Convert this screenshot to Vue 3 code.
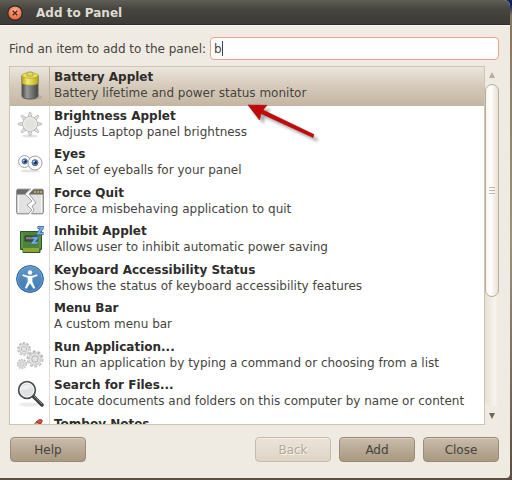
<script setup>
import { ref } from 'vue'

const query = ref('b')
const selected = ref(0)
const items = [
  { icon: 'battery', name: 'Battery Applet', text: 'Battery lifetime and power status monitor' },
  { icon: 'sun', name: 'Brightness Applet', text: 'Adjusts Laptop panel brightness' },
  { icon: 'eyes', name: 'Eyes', text: 'A set of eyeballs for your panel' },
  { icon: 'quit', name: 'Force Quit', text: 'Force a misbehaving application to quit' },
  { icon: 'chip', name: 'Inhibit Applet', text: 'Allows user to inhibit automatic power saving' },
  { icon: 'access', name: 'Keyboard Accessibility Status', text: 'Shows the status of keyboard accessibility features' },
  { icon: '', name: 'Menu Bar', text: 'A custom menu bar' },
  { icon: 'gears', name: 'Run Application...', text: 'Run an application by typing a command or choosing from a list' },
  { icon: 'search', name: 'Search for Files...', text: 'Locate documents and folders on this computer by name or content' },
  { icon: 'note', name: 'Tomboy Notes', text: '' },
]
const gears = [
  { x: 8, y: 7, s: 0.8 },
  { x: 19, y: 17, s: 1 },
  { x: 6, y: 22, s: 0.6 },
]
</script>

<template>
  <div class="desktop">
    <main class="window">
      <header class="titlebar">
        <button class="close" aria-label="Close window">
          <svg viewBox="0 0 16 16" width="16" height="16">
            <defs>
              <radialGradient id="orb" cx=".5" cy=".35" r=".6">
                <stop offset="0" stop-color="#ffb596" />
                <stop offset="1" stop-color="#e9683f" />
              </radialGradient>
            </defs>
            <circle cx="8" cy="8" r="7.7" fill="#2b2723" />
            <circle cx="8" cy="8" r="6.6" fill="url(#orb)" />
            <path d="M5.700 5.700l4.600 4.600M10.300 5.700l-4.600 4.600" stroke="#54291c" stroke-width="1.400" />
          </svg>
        </button>
        <h1>Add to Panel</h1>
      </header>

      <div class="body">
        <div class="search">
          <label for="find">Find an item to add to the panel:</label>
          <div class="field">
            <input id="find" v-model="query" type="text" autocomplete="off" />
            <span class="caret"></span>
          </div>
        </div>

        <div class="pane">
          <div class="viewport">
            <ul class="list" role="listbox" aria-label="Panel items">
              <li
                v-for="(item, i) in items"
                :key="item.name"
                role="option"
                :aria-selected="i === selected"
                :class="{ selected: i === selected }"
                @click="selected = i"
              >
                <span class="icon">
                  <svg v-if="item.icon === 'battery'" viewBox="0 0 28 30" width="28" height="30">
                    <defs>
                      <linearGradient id="cell"><stop offset="0" stop-color="#444" /><stop offset=".3" stop-color="#9a9a9a" /><stop offset=".65" stop-color="#707070" /><stop offset="1" stop-color="#444" /></linearGradient>
                      <linearGradient id="cap"><stop offset="0" stop-color="#b3a51c" /><stop offset=".35" stop-color="#f6ec7b" /><stop offset="1" stop-color="#b8a817" /></linearGradient>
                    </defs>
                    <ellipse cx="16" cy="26" rx="10" ry="3" fill="#6d6250" opacity=".2" />
                    <path d="M6 5v20c0 4 16 4 16 0V5z" fill="url(#cell)" stroke="#5d5d5d" />
                    <path d="M6 4v8c0 3 16 3 16 0V4z" fill="url(#cap)" stroke="#9b8f22" stroke-width=".7" />
                    <ellipse cx="14" cy="4.5" rx="8" ry="2.8" fill="#e9df55" stroke="#aaa031" stroke-width=".7" />
                    <path d="M11 2v2.500c0 1 6 1 6 0V2c0-1.400-6-1.400-6 0z" fill="#e0d464" stroke="#918735" stroke-width=".6" />
                  </svg>
                  <svg v-else-if="item.icon === 'sun'" viewBox="0 0 28 28" width="28" height="28">
                    <ellipse cx="14" cy="25" rx="8" ry="1.500" fill="#e2e2e2" />
                    <g v-for="n in 8" :key="n" :transform="`rotate(${n * 45} 14 13)`">
                      <path d="M12.200 6.500l1-5q.8-1 1.600 0l1 5z" fill="#e4e4e0" stroke="#b0b0ab" stroke-width=".8" />
                    </g>
                    <circle cx="14" cy="13" r="7.400" fill="#e2e3df" stroke="#b8b9b5" />
                    <circle cx="14" cy="13" r="6.300" fill="none" stroke="#f3f3f1" />
                  </svg>
                  <svg v-else-if="item.icon === 'eyes'" viewBox="0 0 28 28" width="28" height="28">
                    <ellipse cx="14" cy="22" rx="10" ry="1.500" fill="#e4e4e4" />
                    <circle cx="8.500" cy="12.500" r="6" fill="#fafafa" stroke="#9da1a4" />
                    <circle cx="8.700" cy="12.400" r="2.600" fill="#6587b8" stroke="#4a6c9c" />
                    <circle cx="9.200" cy="12.400" r="1.400" fill="#112e5d" />
                    <circle cx="19" cy="14" r="7" fill="#fafafa" stroke="#9da1a4" />
                    <circle cx="19" cy="13.700" r="3" fill="#6587b8" stroke="#4a6c9c" />
                    <circle cx="19.400" cy="13.700" r="1.600" fill="#112e5d" />
                    <circle cx="18" cy="12.600" r=".8" fill="#fff" />
                    <circle cx="7.900" cy="11.500" r=".7" fill="#fff" />
                  </svg>
                  <svg v-else-if="item.icon === 'quit'" viewBox="0 0 28 28" width="28" height="28">
                    <rect x=".7" y="1.200" width="26.600" height="24.600" rx="1.500" fill="#e2e2e2" stroke="#7b7b7b" />
                    <path d="M1 1.500h26v5H1z" fill="#6a6a6a" />
                    <path d="M2.500 7.500v17M25.500 7.500v17" stroke="#f6f6f6" />
                    <path d="M18 4h2M21 4h2M24 4h2" stroke="#ddb84b" stroke-width="1.500" />
                    <path d="M15 0l3 0-5 6 7 9-4 3 2 4-3 5h-3l4-5-5-5 5-4-7-7z" fill="#fff" />
                    <path d="M15 1L9 6l7 7-5 4 5 5-4 4M18 1l-5 5 7 9-4 3 2 4-3 4" fill="none" stroke="#8c8c8c" stroke-width=".8" />
                  </svg>
                  <svg v-else-if="item.icon === 'chip'" viewBox="0 0 28 28" width="28" height="28">
                    <path d="M4.500 5.500h21v18H24v3H7v-3H4.500z" fill="#4a8635" stroke="#2c5521" />
                    <path d="M6 7v15M24 10v12" stroke="#73a357" />
                    <path d="M8 22v4M10 22v4M12 22v4M14 22v4M16 22v4M18 22v4M20 22v4M22 22v4" stroke="#d4c33a" />
                    <path d="M9 10h12v5H9z" fill="#51585b" stroke="#2d3b35" />
                    <path d="M10 12h7" stroke="#a6adac" />
                    <path d="M16.500 12h4.200l-4 5h4.800M21.500 1.500h5l-4.500 6h5.500" fill="none" stroke="#38679c" stroke-width="3" />
                    <path d="M16.500 12h4.200l-4 5h4.800M21.500 1.500h5l-4.500 6h5.500" fill="none" stroke="#7db0e0" stroke-width="1.700" />
                  </svg>
                  <svg v-else-if="item.icon === 'access'" viewBox="0 0 28 28" width="28" height="28">
                    <defs><linearGradient id="blue" x2="0" y2="1"><stop offset="0" stop-color="#6498c8" /><stop offset="1" stop-color="#3c79b3" /></linearGradient></defs>
                    <circle cx="14" cy="14" r="13.400" fill="url(#blue)" stroke="#2f669c" />
                    <circle cx="14" cy="14" r="12.200" fill="none" stroke="#76a6d4" stroke-width=".7" />
                    <circle cx="14" cy="7.500" r="2.200" fill="#fff" />
                    <path d="M7 9.500l5 1.500h4l5-1.500.5 1.200-5.300 2.100v3.700l2.800 6.500-1.500.6L14 18l-3.500 5.600-1.500-.6 2.800-6.500v-3.700l-5.300-2.100z" fill="#fff" stroke="#fff" stroke-width=".3" />
                  </svg>
                  <svg v-else-if="item.icon === 'gears'" viewBox="0 0 28 28" width="28" height="28">
                    <g v-for="(g, k) in gears" :key="k" :transform="`translate(${g.x} ${g.y}) scale(${g.s})`">
                      <circle r="7" fill="none" stroke="#b4b4b4" stroke-width="3" stroke-dasharray="2.700 1.700" />
                      <circle r="6.600" fill="none" stroke="#e2e2e2" stroke-width="2" stroke-dasharray="2.500 1.900" />
                      <circle r="6" fill="#e2e2e2" stroke="#c9c9c9" />
                      <circle r="3.200" fill="#f1f1f1" stroke="#adadad" />
                      <circle r="1.300" fill="#fff" stroke="#c0c0c0" stroke-width=".7" />
                    </g>
                  </svg>
                  <svg v-else-if="item.icon === 'search'" viewBox="0 0 28 28" width="28" height="28">
                    <ellipse cx="13" cy="24.500" rx="10" ry="2" fill="#ebebeb" />
                    <path d="M17 16l9 9" stroke="#3e4040" stroke-width="3.500" stroke-linecap="round" />
                    <path d="M18 16l8 8" stroke="#858a8a" stroke-width="1" />
                    <circle cx="11" cy="10" r="8.300" fill="#dfe2e3" stroke="#4a4e4e" stroke-width="1.800" />
                    <circle cx="11" cy="10" r="6.900" fill="none" stroke="#f8f8f8" />
                    <path d="M5 10c2-6 8-6 11-4-2 3-6 4-11 4z" fill="#fff" opacity=".45" />
                  </svg>
                  <svg v-else-if="item.icon === 'note'" viewBox="0 0 28 28" width="28" height="28">
                    <path d="M2 8l14-2 8 4v16H5z" fill="#f2d75c" stroke="#b59a30" />
                    <path d="M12 13L21 2l4 2-8 12-5 2z" fill="#e3a665" stroke="#70432d" stroke-width=".8" />
                    <path d="M20.500 3L23 .7c1-1 4 0 3 2L24.500 5z" fill="#cf5148" stroke="#84241f" stroke-width=".8" />
                  </svg>
                </span>
                <span class="copy">
                  <strong>{{ item.name }}</strong>
                  <span v-if="item.text">{{ item.text }}</span>
                </span>
              </li>
            </ul>
          </div>
          <div class="scrollbar" aria-hidden="true">
            <svg class="arrow" viewBox="0 0 6 6" width="6" height="6"><path d="M3 0l3 6H0z" fill="#b8aea0" /></svg>
            <div class="track">
              <div class="thumb"><i></i><i></i><i></i></div>
            </div>
            <svg class="arrow" viewBox="0 0 6 6" width="6" height="6"><path d="M0 0h6L3 6z" fill="#69655d" /></svg>
          </div>
        </div>

        <footer class="actions">
          <button class="btn help">Help</button>
          <button class="btn" disabled>Back</button>
          <button class="btn">Add</button>
          <button class="btn">Close</button>
        </footer>
      </div>

      <svg class="pointer" viewBox="0 0 76 46" width="76" height="46" aria-hidden="true">
        <defs><filter id="soft" x="-20%" y="-20%" width="150%" height="150%"><feGaussianBlur stdDeviation="1.500" /></filter></defs>
        <path d="M0 1l19 .3-4 4.700 51 24.500-1 3L13 9.500 11.500 16z" fill="#555" opacity=".5" filter="url(#soft)" transform="translate(4 4)" />
        <path d="M0 1l19 .3-4 4.700 51 24.500-1 3L13 9.500 11.500 16z" fill="#c00a0a" stroke="#b00c0c" stroke-width=".6" />
      </svg>
    </main>
  </div>
</template>

<style>
body {
  margin: 0;
  background: #5a4f45;
}
</style>

<style scoped>
.desktop {
  min-height: 100vh;
  box-sizing: border-box;
  padding: 0 2px 3px 0;
  background: linear-gradient(#10265a 0, #10265a 5px, #85765f 16px, #9d927f 50%, #5a4f45);
  font: 12px/16px "DejaVu Sans", sans-serif;
  color: #454440;
}
.window {
  position: relative;
  background: #f0ebe2;
  border-radius: 0 6px 4px 0;
}
.titlebar {
  display: flex;
  align-items: center;
  gap: 13px;
  height: 25px;
  padding: 1px 7px 0;
  box-sizing: border-box;
  background: linear-gradient(#5f5d55, #45443f 40%, #3c3b37);
  border-bottom: 1px solid #2e2d29;
  border-radius: 0 6px 0 0;
}
.titlebar h1 {
  margin: 0;
  font: bold 12px/16px "DejaVu Sans", sans-serif;
  color: #dfdbd2;
}
.close {
  display: flex;
  padding: 0;
  border: 0;
  background: none;
}
.body {
  padding: 11px 11px 16px 9px;
  border-top: 1px solid #faf7f2;
}
.search {
  display: flex;
  align-items: center;
  gap: 4px;
}
.field {
  position: relative;
  flex: 1;
}
.field input {
  display: block;
  width: 100%;
  height: 23px;
  box-sizing: border-box;
  padding: 0 3px;
  border: 1px solid #f0a090;
  border-radius: 4px;
  outline: 0;
  background: #fff;
  font: inherit;
  color: #454440;
}
.caret {
  position: absolute;
  top: 4px;
  left: 12px;
  width: 1px;
  height: 15px;
  background: #444;
}
.pane {
  display: flex;
  margin-top: 6px;
}
.viewport {
  flex: 1;
  min-width: 0;
  height: 357px;
  overflow: hidden;
  border: 1px solid #cdc4b4;
  background: #fff;
}
.list {
  display: grid;
  grid-template-rows: repeat(10, 1fr);
  height: 385px;
  margin: 0;
  padding: 0;
  list-style: none;
}
.list li {
  display: flex;
  min-height: 0;
}
.list li.selected {
  background: linear-gradient(#ebe5dc, #d5cabb 50%, #c3b5a1);
}
.icon {
  display: flex;
  align-items: center;
  justify-content: center;
  flex: none;
  width: 39px;
  border-right: 1px solid #dfdbd3;
}
.selected .icon {
  border-color: #bfb29d;
}
.copy {
  display: flex;
  flex-direction: column;
  padding: 3px 0 0 4px;
  white-space: nowrap;
}
.copy strong {
  line-height: 15px;
  color: #2d2c2a;
}
.scrollbar {
  display: flex;
  flex-direction: column;
  align-items: center;
  gap: 6px;
  width: 14px;
  padding: 6px 0;
}
.track {
  flex: 1;
  width: 14px;
  border-radius: 7px;
  background: linear-gradient(90deg, #e6dfd2, #f7f3ee 70%, #eee8df);
}
.thumb {
  display: flex;
  flex-direction: column;
  align-items: center;
  justify-content: center;
  gap: 2px;
  height: 66%;
  box-sizing: border-box;
  border: 1px solid #b9ac98;
  border-radius: 7px;
  background: linear-gradient(90deg, #f7f5f0, #fffefb 40%, #e7e1d7);
}
.thumb i {
  width: 6px;
  height: 1px;
  background: #c0b7a8;
}
.actions {
  display: flex;
  gap: 8px;
  margin-top: 12px;
  padding-left: 1px;
}
.btn {
  width: 76px;
  height: 25px;
  padding: 0;
  border: 1px solid #9c8c77;
  border-radius: 4px;
  background: linear-gradient(#cbbdac, #b9a995 50%, #a99982);
  box-shadow: inset 0 1px #d8ccbd;
  font: inherit;
  color: #454440;
}
.btn:disabled {
  border-color: #c8bba9;
  background: linear-gradient(#ece4db, #ded4c7);
  box-shadow: inset 0 1px #f3ede5;
  color: #b5a998;
  text-shadow: 1px 1px #f8f4ee;
}
.help {
  margin-right: auto;
}
.pointer {
  position: absolute;
  top: 104px;
  left: 248px;
  pointer-events: none;
}
</style>
